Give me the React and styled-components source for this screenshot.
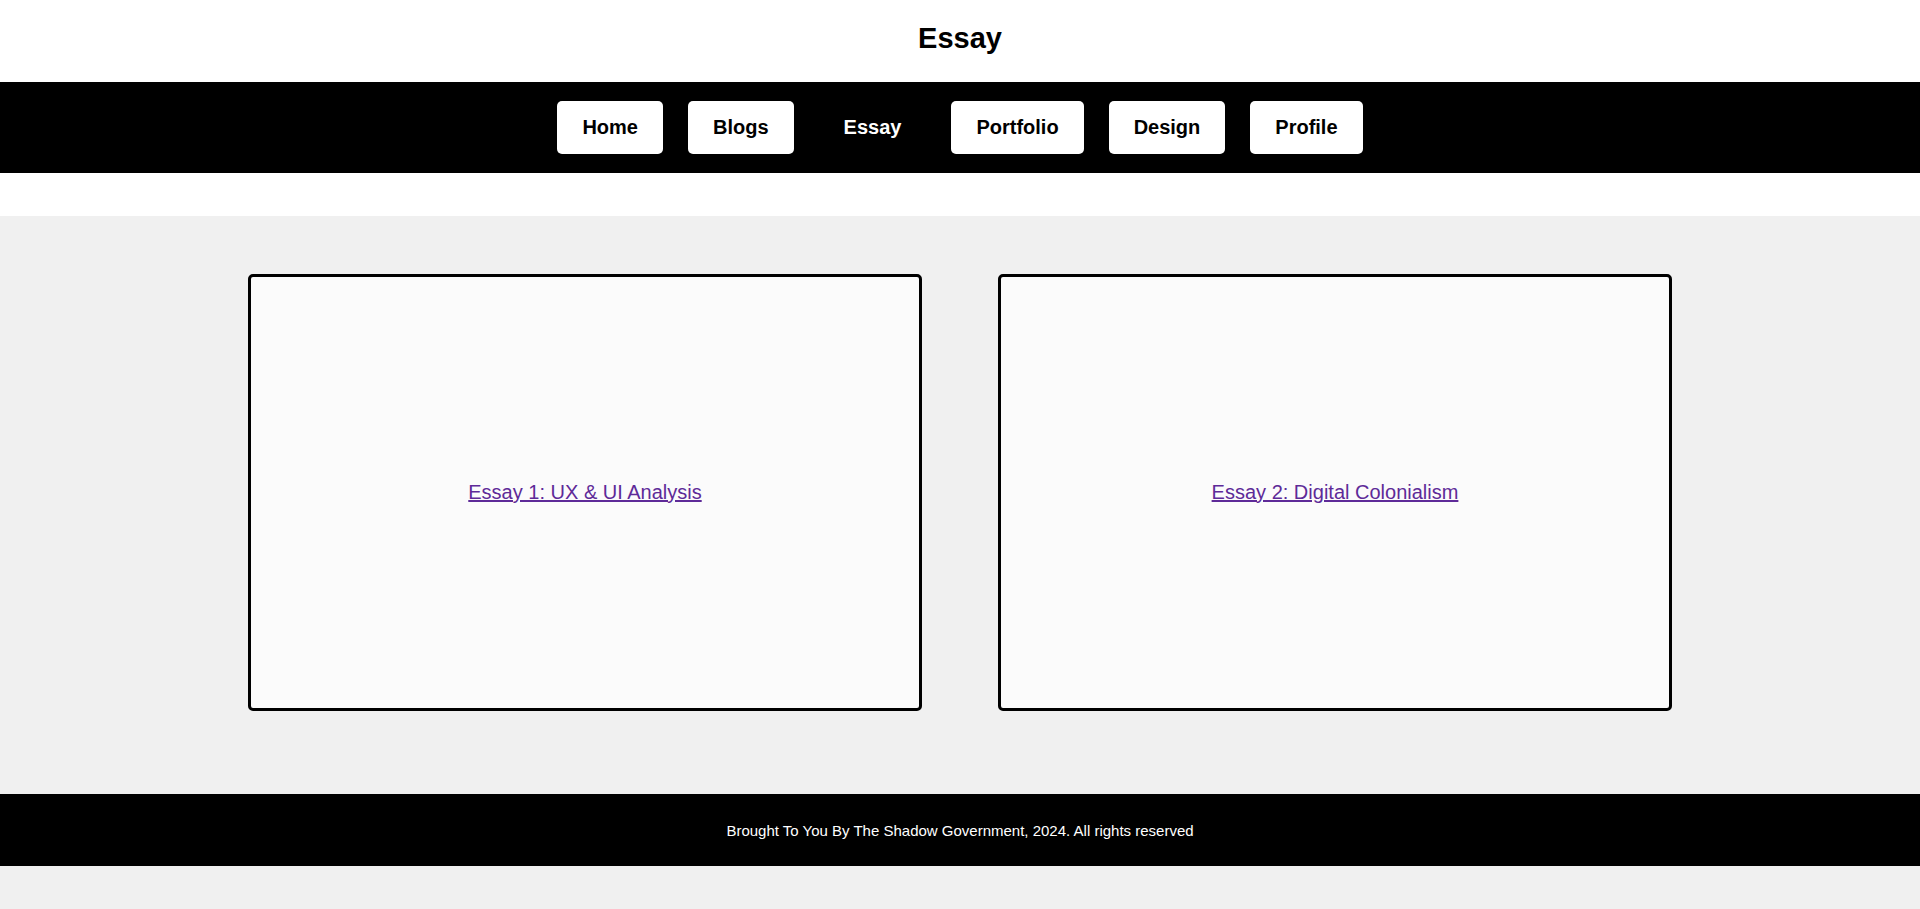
import styled, { createGlobalStyle } from "styled-components";

const GlobalStyle = createGlobalStyle`
  html, body {
    margin: 0;
    padding: 0;
    background: #f0f0f0;
    font-family: "Liberation Sans", Arial, sans-serif;
  }
`;

const Header = styled.header`
  background: #ffffff;
  padding: 22px 0 27px;
  text-align: center;
`;

const Title = styled.h1`
  margin: 0;
  font-size: 29px;
  line-height: 33px;
  font-weight: bold;
  color: #000;
`;

const Nav = styled.nav`
  display: flex;
  justify-content: center;
  gap: 25px;
  background: #000;
  padding: 19px 0;
`;

const NavItem = styled.a`
  display: block;
  padding: 15px 25px;
  font-size: 20px;
  line-height: 23px;
  font-weight: bold;
  border-radius: 5px;
  text-decoration: none;
  cursor: pointer;
  background: ${(p) => (p.$active ? "transparent" : "#ffffff")};
  color: ${(p) => (p.$active ? "#ffffff" : "#000000")};
`;

const Spacer = styled.div`
  height: 43px;
  background: #ffffff;
`;

const Main = styled.main`
  display: flex;
  justify-content: center;
  gap: 76px;
  padding: 58px 0 83px;
  background: #f0f0f0;
`;

const Card = styled.div`
  box-sizing: border-box;
  width: 674px;
  height: 437px;
  border: 3px solid #000;
  border-radius: 5px;
  background: #fbfbfb;
  display: flex;
  align-items: center;
  justify-content: center;
`;

const CardLink = styled.a`
  font-size: 20px;
  color: #5e2a98;
  text-decoration: underline;
`;

const Footer = styled.footer`
  background: #000;
  height: 72px;
  display: flex;
  align-items: center;
  justify-content: center;
  color: #ffffff;
  font-size: 15px;
`;

const links = ["Home", "Blogs", "Essay", "Portfolio", "Design", "Profile"];

const essays = ["Essay 1: UX & UI Analysis", "Essay 2: Digital Colonialism"];

export default function App() {
  return (
    <>
      <GlobalStyle />
      <Header>
        <Title>Essay</Title>
      </Header>
      <Nav>
        {links.map((l) => (
          <NavItem key={l} $active={l === "Essay"}>
            {l}
          </NavItem>
        ))}
      </Nav>
      <Spacer />
      <Main>
        {essays.map((e) => (
          <Card key={e}>
            <CardLink href="#">{e}</CardLink>
          </Card>
        ))}
      </Main>
      <Footer>Brought To You By The Shadow Government, 2024. All rights reserved</Footer>
    </>
  );
}
